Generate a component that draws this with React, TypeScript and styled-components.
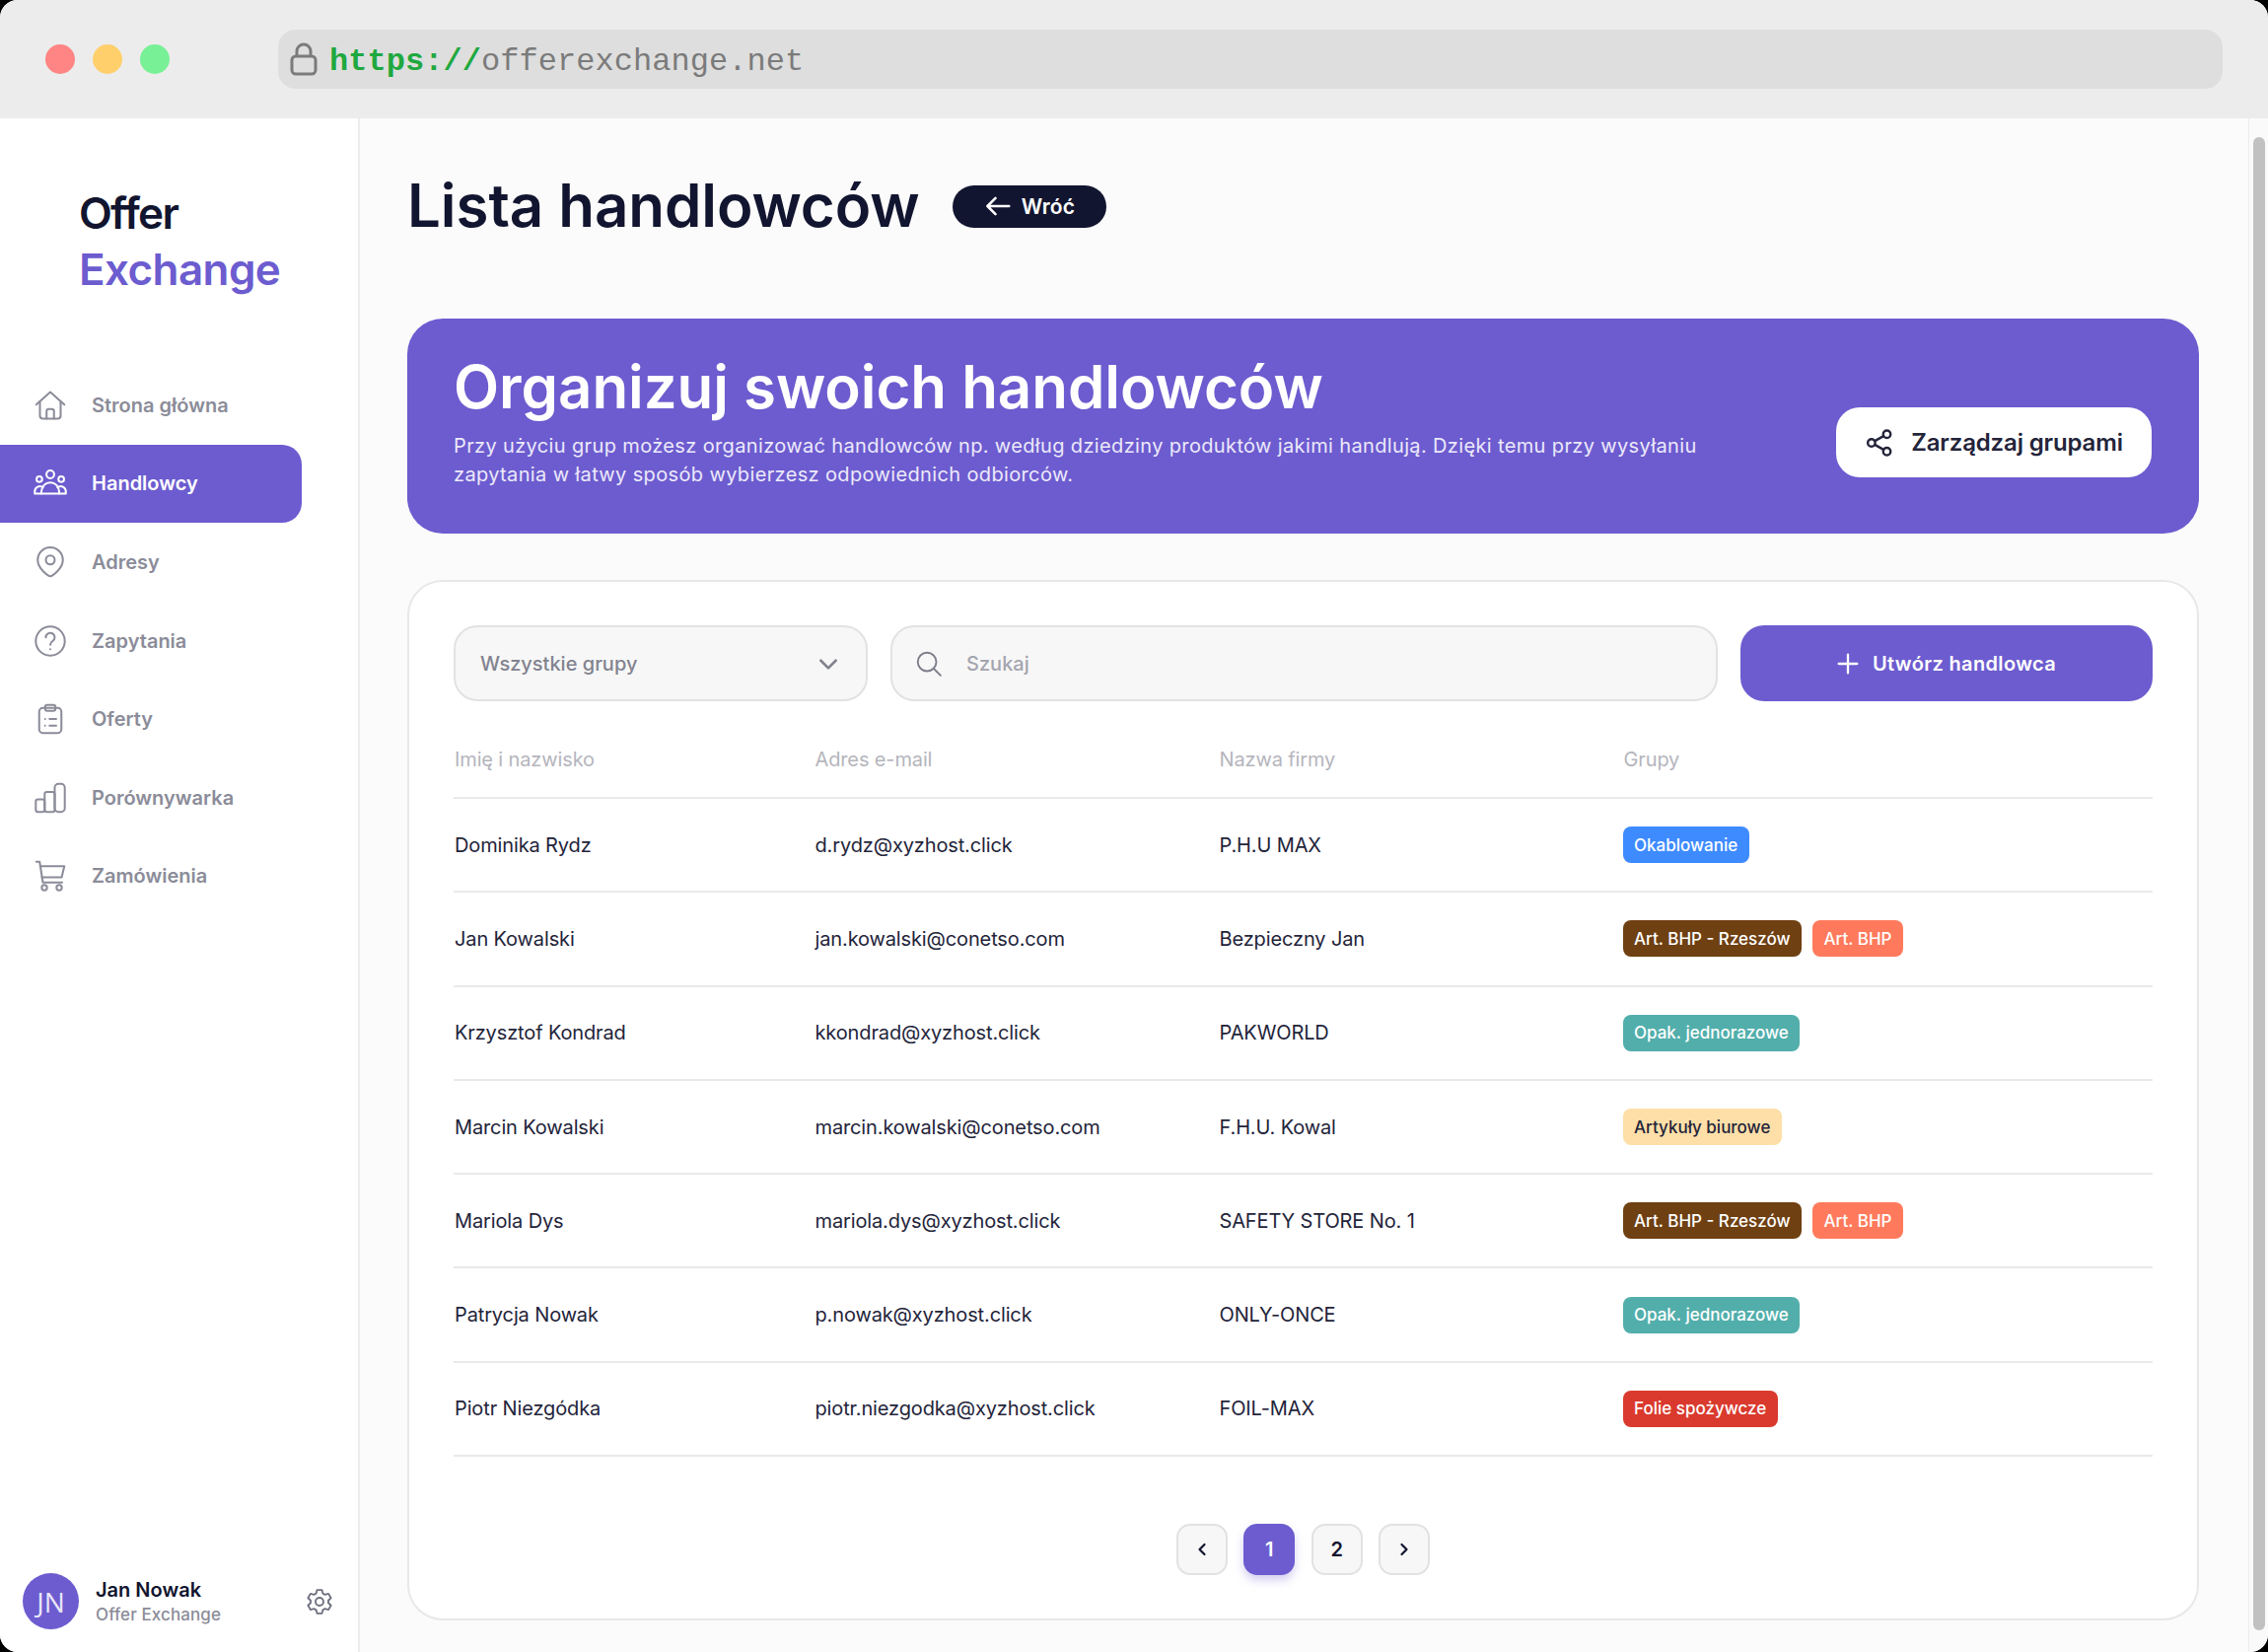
import React from "react";
import styled, { createGlobalStyle } from "styled-components";

const PURPLE = "#6c5ccf";
const INK = "#12152f";
const MUTED = "#8b8c99";

const GlobalStyle = createGlobalStyle`
  html, body {
    margin: 0;
    padding: 0;
    background: #000;
  }
  * {
    box-sizing: border-box;
  }
  body {
    font-family: "Inter", "Liberation Sans", sans-serif;
  }
`;

const Window = styled.div`
  width: 2300px;
  height: 1675px;
  display: flex;
  flex-direction: column;
  border-radius: 18px;
  overflow: hidden;
  background: #fbfbfb;
`;

const BrowserBar = styled.header`
  height: 120px;
  flex-shrink: 0;
  display: flex;
  align-items: center;
  padding: 0 46px;
  background: #ececec;
`;

const Lights = styled.div`
  display: flex;
  gap: 18px;
  margin-right: 110px;
`;

const Light = styled.span<{ $color: string }>`
  width: 30px;
  height: 30px;
  border-radius: 50%;
  background: ${(p) => p.$color};
`;

const AddressBar = styled.div`
  flex: 1;
  height: 60px;
  display: flex;
  align-items: center;
  gap: 12px;
  padding: 0 12px;
  border-radius: 18px;
  background: #dedede;
  font-family: "Liberation Mono", monospace;
  font-size: 32px;
  color: #7b7b7b;
`;

const AddressText = styled.span`
  padding-top: 5px;
  letter-spacing: 0.05px;
`;

const Scheme = styled.span`
  color: #1fa83f;
  font-weight: 700;
`;

const Body = styled.div`
  flex: 1;
  min-height: 0;
  display: flex;
`;

const Sidebar = styled.aside`
  width: 365px;
  flex-shrink: 0;
  display: flex;
  flex-direction: column;
  padding-top: 67.5px;
  background: #fff;
  border-right: 2px solid #ececec;
`;

const Logo = styled.div`
  padding-left: 80px;
  font-size: 44px;
  font-weight: 600;
  line-height: 57px;
  letter-spacing: -1.7px;
  color: ${INK};
`;

const LogoAccent = styled.div`
  letter-spacing: -0.6px;
  color: ${PURPLE};
`;

const Nav = styled.nav`
  display: flex;
  flex-direction: column;
  margin-top: 69.5px;
`;

const NavItem = styled.a<{ $active?: boolean }>`
  width: 306px;
  height: 79.6px;
  display: flex;
  align-items: center;
  gap: 24px;
  padding-left: 33px;
  border-radius: 0 20px 20px 0;
  font-size: 20px;
  font-weight: 600;
  color: ${(p) => (p.$active ? "#fff" : MUTED)};
  background: ${(p) => (p.$active ? PURPLE : "transparent")};
  svg {
    width: 36px;
    height: 36px;
    flex-shrink: 0;
    stroke-width: 1.35;
  }
`;

const UserBox = styled.div`
  margin-top: auto;
  display: flex;
  align-items: center;
  padding: 0 24px 23px 23px;
`;

const Avatar = styled.div`
  width: 57px;
  height: 57px;
  flex-shrink: 0;
  display: flex;
  align-items: center;
  justify-content: center;
  border-radius: 50%;
  background: ${PURPLE};
  font-family: "Open Sans", sans-serif;
  font-size: 28px;
  color: #e9e6f8;
`;

const UserText = styled.div`
  flex: 1;
  margin-left: 17px;
`;

const UserName = styled.div`
  font-size: 20px;
  font-weight: 600;
  line-height: 26px;
  color: ${INK};
`;

const UserOrg = styled.div`
  font-size: 17px;
  font-weight: 500;
  line-height: 24px;
  letter-spacing: 0.1px;
  color: ${MUTED};
`;

const GearIcon = styled.svg`
  width: 30px;
  height: 30px;
  color: #6f7080;
`;

const Main = styled.main`
  flex: 1;
  min-width: 0;
  padding: 53px 50px 0 48px;
`;

const TitleRow = styled.div`
  height: 70px;
  display: flex;
  align-items: center;
  gap: 33px;
`;

const Title = styled.h1`
  margin: 0;
  font-size: 60px;
  font-weight: 600;
  letter-spacing: -0.07px;
  color: ${INK};
`;

const BackButton = styled.button`
  width: 156px;
  height: 43px;
  margin-top: 2px;
  display: flex;
  align-items: center;
  justify-content: center;
  gap: 9px;
  padding: 0;
  border: 0;
  border-radius: 22px;
  background: ${INK};
  font-family: inherit;
  font-size: 21px;
  font-weight: 600;
  letter-spacing: 0.2px;
  color: #fff;
  svg {
    width: 30px;
    height: 30px;
    stroke-width: 2;
  }
`;

const Banner = styled.section`
  height: 218px;
  margin-top: 80px;
  display: flex;
  justify-content: space-between;
  padding: 32.5px 48px 57px 47px;
  border-radius: 36px;
  background: ${PURPLE};
  color: #fff;
`;

const BannerTitle = styled.h2`
  margin: 0;
  font-size: 60px;
  font-weight: 600;
  line-height: 72px;
  letter-spacing: -0.05px;
`;

const BannerText = styled.p`
  margin: 10px 0 0;
  font-size: 20px;
  line-height: 29px;
  letter-spacing: 0.36px;
  color: #ece9fa;
`;

const GroupsButton = styled.button`
  align-self: flex-end;
  width: 320px;
  height: 71px;
  display: flex;
  align-items: center;
  justify-content: center;
  gap: 17px;
  padding: 0;
  border: 0;
  border-radius: 24px;
  background: #fff;
  font-family: inherit;
  font-size: 24px;
  font-weight: 600;
  letter-spacing: -0.15px;
  color: #23243a;
  svg {
    width: 30px;
    height: 30px;
    stroke-width: 1.9;
  }
`;

const Card = styled.section`
  height: 1055px;
  margin-top: 47px;
  padding: 44px 45px 0;
  border: 2px solid #e8e8e8;
  border-radius: 36px;
  background: #fff;
`;

const Toolbar = styled.div`
  display: grid;
  grid-template-columns: 420px 1fr 418px;
  gap: 23px;
  height: 77px;
`;

const Field = styled.div`
  display: flex;
  align-items: center;
  border: 2px solid #e2e2e2;
  border-radius: 24px;
  background: #f7f7f7;
  font-size: 20px;
  font-weight: 500;
`;

const SelectBox = styled(Field)`
  justify-content: space-between;
  padding: 0 25px;
  color: #82838f;
  svg {
    width: 26px;
    height: 26px;
  }
`;

const SearchBox = styled(Field)`
  gap: 23px;
  padding: 0 22px;
  color: #a4a5af;
  svg {
    width: 30px;
    height: 30px;
    color: #7d7e8a;
  }
`;

const CreateButton = styled.button`
  display: flex;
  align-items: center;
  justify-content: center;
  gap: 11px;
  padding: 0 3px 0 0;
  border: 0;
  border-radius: 24px;
  background: ${PURPLE};
  font-family: inherit;
  font-size: 20px;
  font-weight: 600;
  letter-spacing: 0.35px;
  color: #fff;
  svg {
    width: 28px;
    height: 28px;
    stroke-width: 2;
  }
`;

const Row = styled.div<{ $head?: boolean }>`
  display: grid;
  grid-template-columns: 365.5px 410px 410px 1fr;
  align-items: center;
  height: ${(p) => (p.$head ? "99px" : "95.3px")};
  padding-top: ${(p) => (p.$head ? "21px" : "0")};
  border-bottom: 2px solid #e9e9e9;
  font-size: 20px;
  letter-spacing: -0.13px;
  color: ${(p) => (p.$head ? "#b5b5bd" : "#23243a")};
`;

const Cell = styled.div`
  padding-left: 1px;
`;

const Badges = styled.div`
  display: flex;
  gap: 11px;
`;

const Badge = styled.span<{ $bg: string; $fg?: string }>`
  height: 37px;
  display: flex;
  align-items: center;
  padding: 0 11.5px;
  border-radius: 8px;
  background: ${(p) => p.$bg};
  font-size: 17px;
  font-weight: 500;
  letter-spacing: 0;
  color: ${(p) => p.$fg ?? "#fff"};
`;

const Pagination = styled.div`
  display: flex;
  justify-content: center;
  gap: 16.5px;
  margin-top: 68px;
`;

const PageButton = styled.button<{ $active?: boolean }>`
  width: 52px;
  height: 52px;
  display: flex;
  align-items: center;
  justify-content: center;
  padding: 0;
  border: 2px solid ${(p) => (p.$active ? PURPLE : "#e2e2e2")};
  border-radius: 14px;
  background: ${(p) => (p.$active ? PURPLE : "#f7f7f7")};
  box-shadow: ${(p) => (p.$active ? "0 5px 10px rgba(109, 93, 208, 0.3)" : "none")};
  font-family: inherit;
  font-size: 20px;
  font-weight: 600;
  color: ${(p) => (p.$active ? "#fff" : INK)};
  svg {
    width: 24px;
    height: 24px;
    stroke-width: 2.2;
  }
`;

const ScrollTrack = styled.div`
  width: 20px;
  flex-shrink: 0;
  padding: 19px 3px 22px 4px;
  background: #fafafa;
  border-left: 1px solid #ececec;
`;

const ScrollThumb = styled.div`
  height: 100%;
  border-radius: 7px;
  background: #c1c1c1;
`;

const Line = ({ children }: { children: React.ReactNode }) => (
  <svg viewBox="0 0 24 24" fill="none" stroke="currentColor" strokeWidth={1.5} strokeLinecap="round" strokeLinejoin="round">
    {children}
  </svg>
);

const HomeIcon = () => (
  <Line>
    <path d="M2.5 11.5 12 3l9.500 8.500" />
    <path d="M5 9.500V19a2 2 0 0 0 2 2h10a2 2 0 0 0 2-2V9.500" />
    <path d="M9.500 21v-5a1.500 1.500 0 0 1 1.500-1.500h2a1.500 1.500 0 0 1 1.500 1.500v5" />
  </Line>
);

const UsersIcon = () => (
  <Line>
    <circle cx="12" cy="6" r="2.6" />
    <circle cx="4.6" cy="9.2" r="1.9" />
    <circle cx="19.4" cy="9.2" r="1.9" />
    <path d="M6 19v-1.5a6 6 0 0 1 12 0V19z" />
    <path d="M6 19H1.500v-1.500a3.400 3.400 0 0 1 5.600-2.600" />
    <path d="M18 19h4.500v-1.500a3.400 3.400 0 0 0-5.600-2.600" />
  </Line>
);

const PinIcon = () => (
  <Line>
    <path d="M12 21.500c-1 0-8.500-4.800-8.500-11a8.500 8.500 0 0 1 17 0c0 6.200-7.500 11-8.500 11z" />
    <circle cx="12" cy="10.500" r="3" />
  </Line>
);

const HelpIcon = () => (
  <Line>
    <circle cx="12" cy="12" r="9.800" />
    <path d="M9 9.500a3 3 0 1 1 4.600 2.500c-1 .7-1.600 1.300-1.600 2.500" />
    <path d="M12 17.500h.01" />
  </Line>
);

const ClipboardIcon = () => (
  <Line>
    <rect x="4.500" y="4.500" width="15" height="17" rx="2.500" />
    <rect x="8.500" y="2.500" width="7" height="4" rx="1.500" />
    <path d="M8.500 12h.01M8.500 16.500h.01M11.500 12H16M11.500 16.500H16" />
  </Line>
);

const ChartIcon = () => (
  <Line>
    <rect x="2.200" y="13" width="6" height="8.500" rx="1.500" />
    <rect x="8.200" y="8" width="6.800" height="13.500" rx="1.500" />
    <rect x="15" y="2.500" width="6.800" height="19" rx="2.500" />
  </Line>
);

const CartIcon = () => (
  <Line>
    <path d="M2.500 2.500h2.300l2.200 14h13" />
    <path d="M5.200 5.500H21.500l-1.800 7.500H6.300" />
    <circle cx="8" cy="20" r="1.800" />
    <circle cx="18" cy="20" r="1.800" />
  </Line>
);

const ShareIcon = () => (
  <Line>
    <circle cx="18" cy="5" r="3" />
    <circle cx="5.500" cy="12" r="3" />
    <circle cx="18" cy="19" r="3" />
    <path d="m8.200 10.500 7.100-4M8.200 13.500l7.100 4" />
  </Line>
);

const navItems = [
  { label: "Strona główna", icon: <HomeIcon /> },
  { label: "Handlowcy", icon: <UsersIcon />, active: true },
  { label: "Adresy", icon: <PinIcon /> },
  { label: "Zapytania", icon: <HelpIcon /> },
  { label: "Oferty", icon: <ClipboardIcon /> },
  { label: "Porównywarka", icon: <ChartIcon /> },
  { label: "Zamówienia", icon: <CartIcon /> },
];

const brown = { label: "Art. BHP - Rzeszów", bg: "#6f4012" };
const coral = { label: "Art. BHP", bg: "#ff7a5c" };
const teal = { label: "Opak. jednorazowe", bg: "#52aeab" };

const people = [
  { name: "Dominika Rydz", email: "d.rydz@xyzhost.click", firm: "P.H.U MAX", groups: [{ label: "Okablowanie", bg: "#3e8bff" }] },
  { name: "Jan Kowalski", email: "jan.kowalski@conetso.com", firm: "Bezpieczny Jan", groups: [brown, coral] },
  { name: "Krzysztof Kondrad", email: "kkondrad@xyzhost.click", firm: "PAKWORLD", groups: [teal] },
  { name: "Marcin Kowalski", email: "marcin.kowalski@conetso.com", firm: "F.H.U. Kowal", groups: [{ label: "Artykuły biurowe", bg: "#ffdfa8", fg: "#23243a" }] },
  { name: "Mariola Dys", email: "mariola.dys@xyzhost.click", firm: "SAFETY STORE No. 1", groups: [brown, coral] },
  { name: "Patrycja Nowak", email: "p.nowak@xyzhost.click", firm: "ONLY-ONCE", groups: [teal] },
  { name: "Piotr Niezgódka", email: "piotr.niezgodka@xyzhost.click", firm: "FOIL-MAX", groups: [{ label: "Folie spożywcze", bg: "#da3a2e" }] },
];

export default function App() {
  return (
    <Window>
      <GlobalStyle />
      <BrowserBar>
        <Lights>
          <Light $color="#ff8585" />
          <Light $color="#ffcf6b" />
          <Light $color="#78f095" />
        </Lights>
        <AddressBar>
          <svg width="28" height="34" viewBox="0 0 28 34" fill="none" stroke="#7b7b7b" strokeWidth="3">
            <rect x="2" y="14" width="24" height="18" rx="4" />
            <path d="M7 14V9a7 7 0 0 1 14 0v5" />
          </svg>
          <AddressText>
            <Scheme>https://</Scheme>offerexchange.net
          </AddressText>
        </AddressBar>
      </BrowserBar>
      <Body>
        <Sidebar>
          <Logo>
            Offer
            <LogoAccent>Exchange</LogoAccent>
          </Logo>
          <Nav>
            {navItems.map((item) => (
              <NavItem key={item.label} $active={item.active}>
                {item.icon}
                {item.label}
              </NavItem>
            ))}
          </Nav>
          <UserBox>
            <Avatar>JN</Avatar>
            <UserText>
              <UserName>Jan Nowak</UserName>
              <UserOrg>Offer Exchange</UserOrg>
            </UserText>
            <GearIcon viewBox="0 0 24 24" fill="none" stroke="currentColor" strokeWidth={1.5} strokeLinejoin="round">
              <path d="M10 2.500h4l.7 2.800 1.800 1 2.800-.8 2 3.500-2.100 2v2l2.100 2-2 3.500-2.800-.8-1.800 1-.7 2.800h-4l-.7-2.800-1.800-1-2.800.8-2-3.500 2.100-2v-2l-2.100-2 2-3.500 2.800.8 1.800-1z" />
              <circle cx="12" cy="12" r="3.200" />
            </GearIcon>
          </UserBox>
        </Sidebar>
        <Main>
          <TitleRow>
            <Title>Lista handlowców</Title>
            <BackButton>
              <Line>
                <path d="M21 12H3.500M10 5.500 3.500 12l6.500 6.500" />
              </Line>
              Wróć
            </BackButton>
          </TitleRow>
          <Banner>
            <div>
              <BannerTitle>Organizuj swoich handlowców</BannerTitle>
              <BannerText>
                Przy użyciu grup możesz organizować handlowców np. według dziedziny produktów jakimi handlują. Dzięki temu przy wysyłaniu
                <br />
                zapytania w łatwy sposób wybierzesz odpowiednich odbiorców.
              </BannerText>
            </div>
            <GroupsButton>
              <ShareIcon />
              Zarządzaj grupami
            </GroupsButton>
          </Banner>
          <Card>
            <Toolbar>
              <SelectBox>
                Wszystkie grupy
                <svg viewBox="0 0 24 24" fill="none" stroke="currentColor" strokeWidth={2.5} strokeLinecap="round" strokeLinejoin="round">
                  <path d="m5 9 7 7 7-7" />
                </svg>
              </SelectBox>
              <SearchBox>
                <Line>
                  <circle cx="10.500" cy="10.500" r="7.500" />
                  <path d="m16 16 5.500 5.500" />
                </Line>
                Szukaj
              </SearchBox>
              <CreateButton>
                <Line>
                  <path d="M12 4v16M4 12h16" />
                </Line>
                Utwórz handlowca
              </CreateButton>
            </Toolbar>
            <Row $head>
              <Cell>Imię i nazwisko</Cell>
              <Cell>Adres e-mail</Cell>
              <Cell>Nazwa firmy</Cell>
              <Cell>Grupy</Cell>
            </Row>
            {people.map((person) => (
              <Row key={person.name}>
                <Cell>{person.name}</Cell>
                <Cell>{person.email}</Cell>
                <Cell>{person.firm}</Cell>
                <Badges>
                  {person.groups.map((group) => (
                    <Badge key={group.label} $bg={group.bg} $fg={"fg" in group ? group.fg : undefined}>
                      {group.label}
                    </Badge>
                  ))}
                </Badges>
              </Row>
            ))}
            <Pagination>
              <PageButton>
                <Line>
                  <path d="m14.500 7-5 5 5 5" />
                </Line>
              </PageButton>
              <PageButton $active>1</PageButton>
              <PageButton>2</PageButton>
              <PageButton>
                <Line>
                  <path d="m9.500 7 5 5-5 5" />
                </Line>
              </PageButton>
            </Pagination>
          </Card>
        </Main>
        <ScrollTrack>
          <ScrollThumb />
        </ScrollTrack>
      </Body>
    </Window>
  );
}
